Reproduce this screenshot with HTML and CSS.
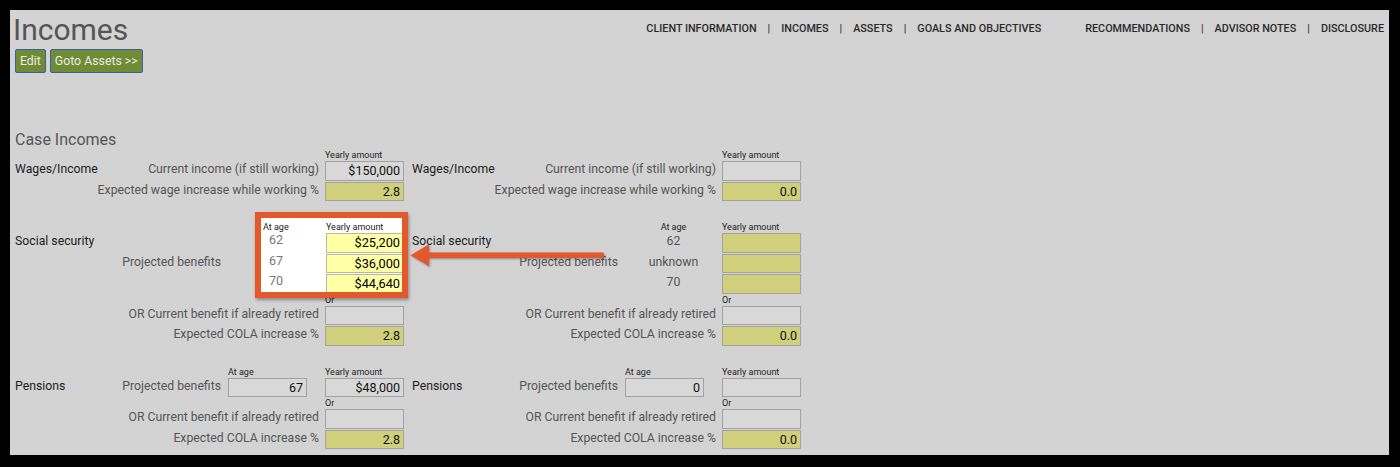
FILE: index.html
```html
<!DOCTYPE html>
<html lang="en">
<head>
    <meta charset="UTF-8">
    <meta name="viewport" content="width=device-width, initial-scale=1.0">
    <title>Incomes</title>
    <link rel="stylesheet" href="styles.css">
</head>
<body>
    <div class="screen">
        <div class="header">
            <div class="header-left">
                <h1>Incomes</h1>
                <div class="actions">
                    <button class="btn">Edit</button>
                    <button class="btn">Goto Assets &gt;&gt;</button>
                </div>
            </div>
            <ul class="nav">
                <li>Client Information</li>
                <li class="sep">|</li>
                <li>Incomes</li>
                <li class="sep">|</li>
                <li>Assets</li>
                <li class="sep">|</li>
                <li>Goals and Objectives</li>
                <li class="wide-gap">Recommendations</li>
                <li class="sep">|</li>
                <li>Advisor Notes</li>
                <li class="sep">|</li>
                <li>Disclosure</li>
            </ul>
        </div>

        <h2 class="page-title">Case Incomes</h2>

        <div class="columns">
            <!-- first person -->
            <div class="column">
                <div class="section">
                    <div class="head amount">Yearly amount</div>
                    <div class="label">Wages/Income</div>
                    <div class="desc wide">Current income (if still working)</div>
                    <div class="field amount">$150,000</div>
                    <div class="desc wide">Expected wage increase while working %</div>
                    <div class="field amount yellow">2.8</div>
                </div>

                <div class="section">
                    <div class="head age center">At age</div>
                    <div class="head amount">Yearly amount</div>
                    <div class="label">Social security</div>
                    <div class="age-text age">62</div>
                    <div class="field amount yellow"></div>
                    <div class="desc">Projected benefits</div>
                    <div class="age-text age">67</div>
                    <div class="field amount yellow"></div>
                    <div class="age-text age">70</div>
                    <div class="field amount yellow"></div>
                    <div class="head amount">Or</div>
                    <div class="desc wide">OR Current benefit if already retired</div>
                    <div class="field amount"></div>
                    <div class="desc wide">Expected COLA increase %</div>
                    <div class="field amount yellow">2.8</div>

                    <div class="callout">
                        <div class="callout-grid">
                            <div class="c-head c-head-age">At age</div>
                            <div class="c-head">Yearly amount</div>
                            <div class="c-age">62</div>
                            <div class="c-field">$25,200</div>
                            <div class="c-age">67</div>
                            <div class="c-field">$36,000</div>
                            <div class="c-age">70</div>
                            <div class="c-field">$44,640</div>
                        </div>
                    </div>
                </div>

                <div class="section">
                    <div class="head age">At age</div>
                    <div class="head amount">Yearly amount</div>
                    <div class="label">Pensions</div>
                    <div class="desc">Projected benefits</div>
                    <div class="field age">67</div>
                    <div class="field amount">$48,000</div>
                    <div class="head amount">Or</div>
                    <div class="desc wide">OR Current benefit if already retired</div>
                    <div class="field amount"></div>
                    <div class="desc wide">Expected COLA increase %</div>
                    <div class="field amount yellow">2.8</div>
                </div>
            </div>

            <!-- spouse -->
            <div class="column">
                <div class="section">
                    <div class="head amount">Yearly amount</div>
                    <div class="label">Wages/Income</div>
                    <div class="desc wide">Current income (if still working)</div>
                    <div class="field amount"></div>
                    <div class="desc wide">Expected wage increase while working %</div>
                    <div class="field amount yellow">0.0</div>
                </div>

                <div class="section">
                    <div class="head age center">At age</div>
                    <div class="head amount">Yearly amount</div>
                    <div class="label">Social security</div>
                    <div class="age-text age">62</div>
                    <div class="field amount yellow"></div>
                    <div class="desc">Projected benefits</div>
                    <div class="age-text age">unknown</div>
                    <div class="field amount yellow"></div>
                    <div class="age-text age">70</div>
                    <div class="field amount yellow"></div>
                    <div class="head amount">Or</div>
                    <div class="desc wide">OR Current benefit if already retired</div>
                    <div class="field amount"></div>
                    <div class="desc wide">Expected COLA increase %</div>
                    <div class="field amount yellow">0.0</div>
                </div>

                <div class="section">
                    <div class="head age">At age</div>
                    <div class="head amount">Yearly amount</div>
                    <div class="label">Pensions</div>
                    <div class="desc">Projected benefits</div>
                    <div class="field age">0</div>
                    <div class="field amount"></div>
                    <div class="head amount">Or</div>
                    <div class="desc wide">OR Current benefit if already retired</div>
                    <div class="field amount"></div>
                    <div class="desc wide">Expected COLA increase %</div>
                    <div class="field amount yellow">0.0</div>
                </div>
            </div>
        </div>

        <svg class="arrow" width="196" height="26" viewBox="0 0 196 26">
            <rect x="16" y="10.6" width="178" height="5.4" rx="1.5" fill="#e4592b"/>
            <polygon points="0.5,13.3 19,2.3 19,24.3" fill="#e4592b"/>
        </svg>
    </div>
</body>
</html>
```

FILE: styles.css
```css
body {
    margin: 0;
    background-color: #000;
    font-family: Roboto, "Liberation Sans", Arial, sans-serif;
}

.screen {
    position: relative;
    box-sizing: border-box;
    width: 1379px;
    height: 445px;
    margin: 10px 0 0 10px;
    padding: 5px;
    background-color: #d3d3d3;
    overflow: hidden;
}

.header {
    display: flex;
    align-items: flex-start;
}

.header h1 {
    margin: 0 0 0 -2px;
    font-size: 30px;
    line-height: 30px;
    font-weight: 400;
    color: #555;
}

.actions {
    display: flex;
    gap: 4px;
    margin-top: 4px;
}

.btn {
    height: 24px;
    padding: 0 4px;
    border: 1px solid #3c5ba8;
    border-radius: 2px;
    background-color: #6f8b33;
    color: #ececec;
    font-family: inherit;
    font-size: 12.3px;
}

.nav {
    display: flex;
    margin: 6.5px 0 0 auto;
    padding: 0;
    list-style: none;
    font-size: 10.8px;
    line-height: 14px;
    font-weight: 500;
    text-transform: uppercase;
    color: #2a2a2a;
}

.nav .sep {
    padding: 0 11px;
    font-weight: 400;
}

.nav .wide-gap {
    margin-left: 44px;
}

.page-title {
    margin: 57px 0 0 0;
    font-size: 16px;
    line-height: 20px;
    font-weight: 400;
    color: #555;
}

.columns {
    display: flex;
    gap: 8px;
}

.section {
    position: relative;
    display: grid;
    grid-template-columns: 82px 131px 97px 79px;
    margin-bottom: 20px;
}

.head {
    height: 11px;
    font-size: 9px;
    line-height: 11px;
    color: #222;
    white-space: nowrap;
}

.center {
    text-align: center;
}

.label,
.desc,
.age-text {
    font-size: 12.25px;
    line-height: 16px;
    white-space: nowrap;
}

.label {
    grid-column: 1;
    color: #1d1d1d;
}

.desc {
    grid-column: 2;
    padding-right: 7px;
    text-align: right;
    color: #555;
}

.desc.wide {
    grid-column: 2 / span 2;
    padding-right: 6px;
}

.age {
    grid-column: 3;
}

.amount {
    grid-column: 4;
}

.age-text {
    text-align: center;
    color: #555;
}

.field {
    box-sizing: border-box;
    width: 79px;
    height: 19.5px;
    margin-bottom: 1px;
    padding-right: 3px;
    border: 1px solid #a2a2a2;
    background-color: #d8d8d8;
    text-align: right;
    font-size: 12.5px;
    line-height: 17.5px;
    color: #111;
}

.yellow {
    background-color: #d0cf7c;
}

/* highlighted callout */
.callout {
    position: absolute;
    left: 240px;
    top: -10px;
    box-sizing: border-box;
    width: 153px;
    height: 86px;
    border: 6px solid #e4592b;
    background-color: #fff;
    box-shadow: 1px 2px 3px rgba(0,0,0,0.35);
    overflow: hidden;
}

.callout-grid {
    display: grid;
    grid-template-columns: 65px 80px;
    grid-template-rows: 15px 20.5px 20.5px 20.5px;
}

.c-head {
    padding-top: 4px;
    font-size: 9px;
    line-height: 11px;
    color: #222;
    white-space: nowrap;
}

.c-head-age {
    padding-left: 2px;
}

.c-age {
    padding-left: 8px;
    font-size: 12.5px;
    line-height: 14px;
    color: #777;
}

.c-field {
    box-sizing: border-box;
    height: 19.5px;
    padding-right: 5px;
    border: 1px solid #b9b9a0;
    background-color: #ffffa5;
    text-align: right;
    font-size: 12.75px;
    line-height: 17.5px;
    color: #000;
}

.arrow {
    position: absolute;
    left: 400px;
    top: 232px;
    filter: drop-shadow(1px 1px 1px rgba(0,0,0,0.35));
}
```
